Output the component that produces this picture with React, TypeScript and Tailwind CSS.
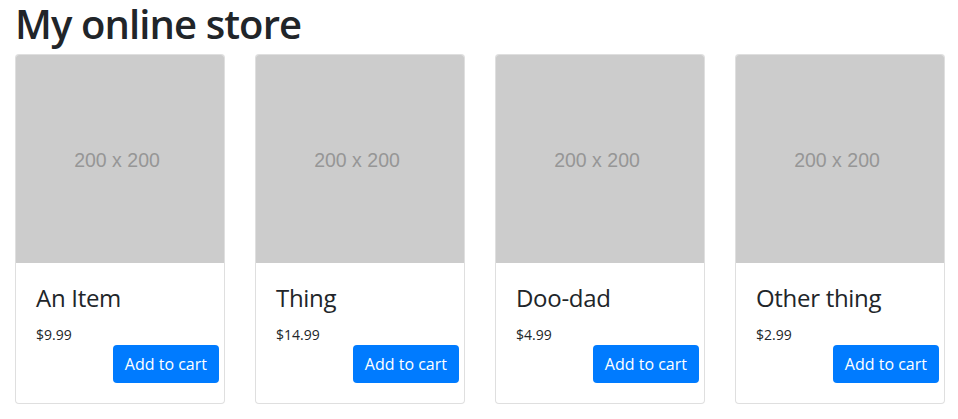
const PRODUCTS = [
  { id: 1, name: "An Item", price: 9.99 },
  { id: 2, name: "Thing", price: 14.99 },
  { id: 3, name: "Doo-dad", price: 4.99 },
  { id: 4, name: "Other thing", price: 2.99 },
];

export default function App() {
  return (
    <div className="min-h-screen bg-white px-[15px] text-[#212529]" style={{ fontFamily: '"Open Sans", "Noto Sans", sans-serif' }}>
      <h1 className="mb-[6px] text-[40px] font-semibold leading-[48px] tracking-[-0.9px]">My online store</h1>
      <div className="flex gap-[30px]">
        {PRODUCTS.map(p => (
          <div key={p.id} className="flex w-[210px] shrink-0 flex-col rounded border border-black/[0.125] bg-white">
            <div className="flex h-[208px] items-center justify-center rounded-t-[3px] bg-[#cccccc] pr-[6px] pt-[4px] text-[19.5px] text-[#969696]" style={{ fontFamily: '"Liberation Sans", Arial, sans-serif' }}>
              200 x 200
            </div>
            <div className="p-5">
              <h4 className="mb-3 text-[24px] leading-[29px] tracking-[-0.3px]">{p.name}</h4>
              <p className="text-[14px] leading-[21px]">${p.price.toFixed(2)}</p>
              <div className="-mr-[15px] flex justify-end">
                <button className="h-[38px] rounded bg-[#007bff] px-3 text-[16px] leading-6 text-white">Add to cart</button>
              </div>
            </div>
          </div>
        ))}
      </div>
    </div>
  );
}
